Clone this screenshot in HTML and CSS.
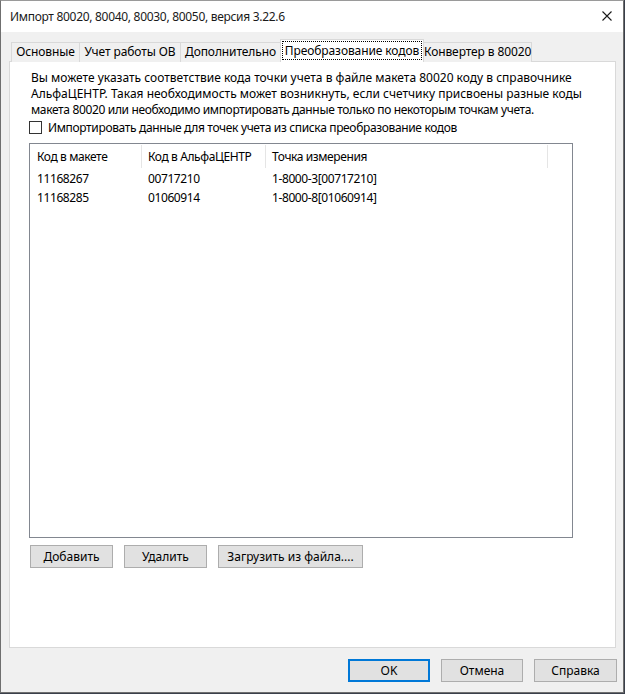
FILE: index.html
```
<!DOCTYPE html>
<html lang="ru">
<head>
    <meta charset="UTF-8">
    <title>Импорт 80020, 80040, 80030, 80050, версия 3.22.6</title>
    <link rel="stylesheet" href="styles.css">
</head>
<body>
    <div class="window">
        <div class="titlebar">
            <span class="title">Импорт 80020, 80040, 80030, 80050, версия 3.22.6</span>
            <svg class="close" xmlns="http://www.w3.org/2000/svg" viewBox="0 0 10 10" width="10" height="10">
                <path d="M0.5,0.5 L9.5,9.5 M9.5,0.5 L0.5,9.5" stroke="#1a1a1a" stroke-width="1.1" fill="none"/>
            </svg>
        </div>

        <div class="client">
            <ul class="tabs">
                <li class="tab tab-main">Основные</li>
                <li class="tab tab-ov">Учет работы ОВ</li>
                <li class="tab tab-extra">Дополнительно</li>
                <li class="tab tab-codes active"><span class="focus">Преобразование кодов</span></li>
                <li class="tab tab-conv">Конвертер в 80020</li>
            </ul>

            <div class="panel">
                <p class="hint">
                    Вы можете указать соответствие кода точки учета в файле макета 80020 коду в справочнике<br>
                    АльфаЦЕНТР. Такая необходимость может возникнуть, если счетчику присвоены разные коды<br>
                    <span class="tight">макета 80020 или необходимо импортировать данные только по некоторым точкам учета.</span>
                </p>

                <label class="check-row">
                    <span class="checkbox"></span>
                    <span class="tight">Импортировать данные для точек учета из списка преобразование кодов</span>
                </label>

                <div class="listview">
                    <div class="lv-header">
                        <div class="col col-1">Код в макете</div>
                        <div class="col col-2">Код в АльфаЦЕНТР</div>
                        <div class="col col-3">Точка измерения</div>
                    </div>
                    <div class="lv-row">
                        <div class="col col-1">11168267</div>
                        <div class="col col-2">00717210</div>
                        <div class="col col-3">1-8000-3[00717210]</div>
                    </div>
                    <div class="lv-row">
                        <div class="col col-1">11168285</div>
                        <div class="col col-2">01060914</div>
                        <div class="col col-3">1-8000-8[01060914]</div>
                    </div>
                </div>

                <div class="list-actions">
                    <button class="btn btn-add">Добавить</button>
                    <button class="btn btn-del">Удалить</button>
                    <button class="btn btn-load">Загрузить из файла....</button>
                </div>
            </div>

            <div class="dialog-actions">
                <button class="btn btn-ok">OK</button>
                <button class="btn btn-cancel">Отмена</button>
                <button class="btn btn-help">Справка</button>
            </div>
        </div>
    </div>
</body>
</html>
```

FILE: styles.css
```
/* Reset */
* {
    margin: 0;
    padding: 0;
    box-sizing: border-box;
}

body {
    font-family: "Noto Sans", "Open Sans", sans-serif;
    font-size: 12px;
    color: #000;
    background-color: #3a3f4a;
    width: 625px;
    height: 694px;
    overflow: hidden;
}

/* Window frame */
.window {
    width: 624px;
    height: 693px;
    background-color: #f0f0f0;
    border: 1px solid #6f6f6f;
    border-top-color: #9a9a9a;
    display: flex;
    flex-direction: column;
}

.titlebar {
    height: 31px;
    background-color: #fff;
    display: flex;
    align-items: center;
    justify-content: space-between;
    padding: 0 11px 1px 9px;
    flex-shrink: 0;
}

.title {
    color: #1a1a1a;
    letter-spacing: -0.3px;
}

.close {
    display: block;
}

/* Client area */
.client {
    flex: 1;
    display: flex;
    flex-direction: column;
    padding: 7px 6px 0 8px;
}

/* Tabs */
.tabs {
    list-style: none;
    display: flex;
    align-items: flex-end;
    height: 23px;
    margin-left: 2px;
    position: relative;
    z-index: 1;
    margin-bottom: -1px;
}

.tab {
    height: 20px;
    line-height: 18px;
    text-align: center;
    background-color: #f0f0f0;
    border: 1px solid #d9d9d9;
    border-bottom: none;
    margin-left: -1px;
    white-space: nowrap;
    letter-spacing: -0.1px;
}

.tab-main { width: 69px; margin-left: 0; }
.tab-ov { width: 102px; }
.tab-extra { width: 101px; }
.tab-codes { width: 144px; }
.tab-conv { width: 109px; }

.tab.active {
    height: 23px;
    background-color: #fff;
    border-color: #d9d9d9;
    padding-top: 2px;
    line-height: 16px;
}

.focus {
    display: inline-block;
    outline: 1px dotted #000;
    padding: 0 2px;
    line-height: 17px;
}

.panel {
    width: 607px;
    height: 587px;
    background-color: #fff;
    border: 1px solid #d9d9d9;
    padding: 8px 0 0 19px;
}

.hint {
    line-height: 16px;
    margin-left: 2px;
    white-space: nowrap;
}

.tight {
    letter-spacing: -0.35px;
}

.check-row {
    display: flex;
    align-items: center;
    gap: 6px;
    margin-top: 1px;
    height: 17px;
}

.checkbox {
    width: 13px;
    height: 13px;
    border: 1px solid #333;
    background-color: #fff;
    flex-shrink: 0;
}

/* List view */
.listview {
    width: 544px;
    height: 395px;
    border: 1px solid #828790;
    margin-top: 7px;
    letter-spacing: -0.4px;
}

.lv-header,
.lv-row {
    display: flex;
}

.lv-header {
    height: 24px;
    align-items: center;
}

.lv-header .col {
    height: 23px;
    line-height: 23px;
    border-right: 1px solid #e5e5e5;
}

.lv-row {
    height: 19px;
    line-height: 19px;
}

.lv-header + .lv-row {
    margin-top: 1px;
}

.col {
    padding-left: 7px;
    white-space: nowrap;
}

.col-1 { width: 112px; }
.col-2 { width: 124px; padding-left: 6px; }
.col-3 { width: 282px; padding-left: 6px; }

/* Buttons */
.btn {
    font-family: inherit;
    font-size: 12px;
    color: #000;
    height: 23px;
    background-color: #e1e1e1;
    border: 1px solid #adadad;
}

.list-actions {
    display: flex;
    gap: 11px;
    margin-top: 7px;
    margin-left: 1px;
}

.btn-add { width: 83px; }
.btn-del { width: 83px; }
.btn-load { width: 145px; }

.dialog-actions {
    display: flex;
    justify-content: flex-end;
    gap: 11px;
    margin-top: 11px;
}

.btn-ok {
    width: 82px;
    border: 2px solid #0078d7;
}

.btn-cancel { width: 82px; }
.btn-help { width: 83px; }
```
